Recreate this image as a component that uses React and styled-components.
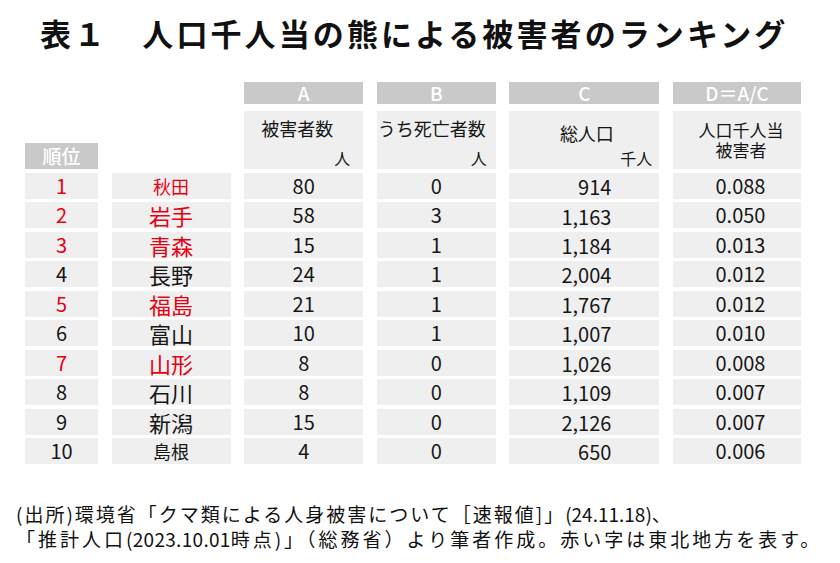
import React from 'react'
import styled, { createGlobalStyle } from 'styled-components'

const GlobalStyle = createGlobalStyle`
  html, body {
    margin: 0;
    padding: 0;
    background: #fff;
  }
  body {
    font-family: "Noto Sans CJK JP", "Noto Sans", sans-serif;
    color: #161616;
  }
`

const rows = [
  { rank: 1, pref: '秋田', a: 80, b: 0, c: '914', d: '0.088', north: true, small: true },
  { rank: 2, pref: '岩手', a: 58, b: 3, c: '1,163', d: '0.050', north: true, drop: 3 },
  { rank: 3, pref: '青森', a: 15, b: 1, c: '1,184', d: '0.013', north: true },
  { rank: 4, pref: '長野', a: 24, b: 1, c: '2,004', d: '0.012' },
  { rank: 5, pref: '福島', a: 21, b: 1, c: '1,767', d: '0.012', north: true },
  { rank: 6, pref: '富山', a: 10, b: 1, c: '1,007', d: '0.010' },
  { rank: 7, pref: '山形', a: 8, b: 0, c: '1,026', d: '0.008', north: true },
  { rank: 8, pref: '石川', a: 8, b: 0, c: '1,109', d: '0.007' },
  { rank: 9, pref: '新潟', a: 15, b: 0, c: '2,126', d: '0.007' },
  { rank: 10, pref: '島根', a: 4, b: 0, c: '650', d: '0.006', small: true },
]

const App = () => {
  return (
    <Page>
      <GlobalStyle />
      <Title>表１　人口千人当の熊による被害者のランキング</Title>

      <Table>
        <LetterRow>
          <span />
          <span />
          <Letter>A</Letter>
          <Letter>B</Letter>
          <Letter>C</Letter>
          <Letter>D＝A/C</Letter>
        </LetterRow>

        <Body>
          <RankHead>順位</RankHead>
          <span />
          <HeadCell $pt={7} $pr={13}>
            <Label>被害者数</Label>
            <Unit>人</Unit>
          </HeadCell>
          <HeadCell $pt={7} $pr={9}>
            <Label>うち死亡者数</Label>
            <Unit>人</Unit>
          </HeadCell>
          <HeadCell $pt={12} $pr={7}>
            <Label $indent={12}>総人口</Label>
            <Unit>千人</Unit>
          </HeadCell>
          <HeadCell $pt={9} $pr={0}>
            <Label $indent={8} $size={17}>人口千人当<br />被害者</Label>
          </HeadCell>

          {rows.map((row) => (
            <React.Fragment key={row.rank}>
              <Cell $red={row.north}>{row.rank}</Cell>
              <Cell $red={row.north} $size={row.small ? 18 : 22}>{row.pref}</Cell>
              <Cell>{row.a}</Cell>
              <Cell>{row.b}</Cell>
              <NumCell $drop={row.drop || 1}>{row.c}</NumCell>
              <Cell $indent={7}>{row.d}</Cell>
            </React.Fragment>
          ))}
        </Body>
      </Table>

      <Note>
        <p>
          <Run $ls={2}>(出所)環境省「クマ類による人身被害について［速報値]」</Run>
          <Run $ls={0}>(24.11.18)</Run>、
        </p>
        <p>
          <Run $ls={3}>「推計人口</Run>
          <Run $ls={0.3}>(2023.10.01</Run>
          <Run $ls={3}>時点)」（総務省）より筆者作成。赤い字は東北地方を表す。</Run>
        </p>
      </Note>
    </Page>
  )
}

const Page = styled.div`
  width: 840px;
  height: 563px;
  padding-top: 17px;
  box-sizing: border-box;
  overflow: hidden;
`

const Title = styled.h1`
  margin: 0 0 0 40px;
  font-size: 31px;
  line-height: 31px;
  font-weight: 700;
  letter-spacing: 3.1px;
  color: #111;
  white-space: nowrap;
`

const Table = styled.div`
  margin: 34px 0 0 25px;
`

const Cols = styled.div`
  display: grid;
  grid-template-columns: 73px 119px 119px 119px 150px 128px;
  column-gap: 13.6px;
`

const LetterRow = styled(Cols)`
  margin-bottom: 7px;
`

const Letter = styled.div`
  height: 22px;
  background: #c9c9c9;
  color: #fff;
  font-size: 19px;
  font-weight: 500;
  line-height: 22px;
  text-align: center;
`

const Body = styled(Cols)`
  grid-template-rows: 58px;
  grid-auto-rows: 26px;
  row-gap: 3.55px;
`

const RankHead = styled.div`
  align-self: end;
  height: 26px;
  background: #c9c9c9;
  color: #fff;
  font-size: 19px;
  font-weight: 500;
  line-height: 26px;
  text-align: center;
`

const HeadCell = styled.div`
  display: flex;
  flex-direction: column;
  padding: ${(p) => p.$pt}px ${(p) => p.$pr}px 1px 0;
  background: #efefef;
  font-size: 18px;
  line-height: 20px;
  color: #161616;
`

const Label = styled.div`
  padding-left: ${(p) => p.$indent || 0}px;
  font-size: ${(p) => p.$size || 18}px;
  text-align: center;
  white-space: nowrap;
`

const Unit = styled.div`
  margin-top: auto;
  align-self: flex-end;
  font-size: 16px;
  line-height: 20px;
`

const Cell = styled.div`
  background: #efefef;
  color: ${(p) => (p.$red ? '#e60012' : '#161616')};
  font-size: ${(p) => p.$size || 20}px;
  line-height: 26px;
  padding-left: ${(p) => p.$indent || 0}px;
  text-align: center;
  white-space: nowrap;
`

const NumCell = styled(Cell)`
  padding: ${(p) => p.$drop}px 48px 0 0;
  box-sizing: border-box;
  line-height: ${(p) => 26 - p.$drop}px;
  text-align: right;
`

const Note = styled.div`
  margin: 37px 0 0 16px;
  font-size: 19px;
  line-height: 25px;
  color: #111;
  white-space: nowrap;

  p {
    margin: 0;
  }
`

const Run = styled.span`
  letter-spacing: ${(p) => p.$ls}px;
`

export default App
